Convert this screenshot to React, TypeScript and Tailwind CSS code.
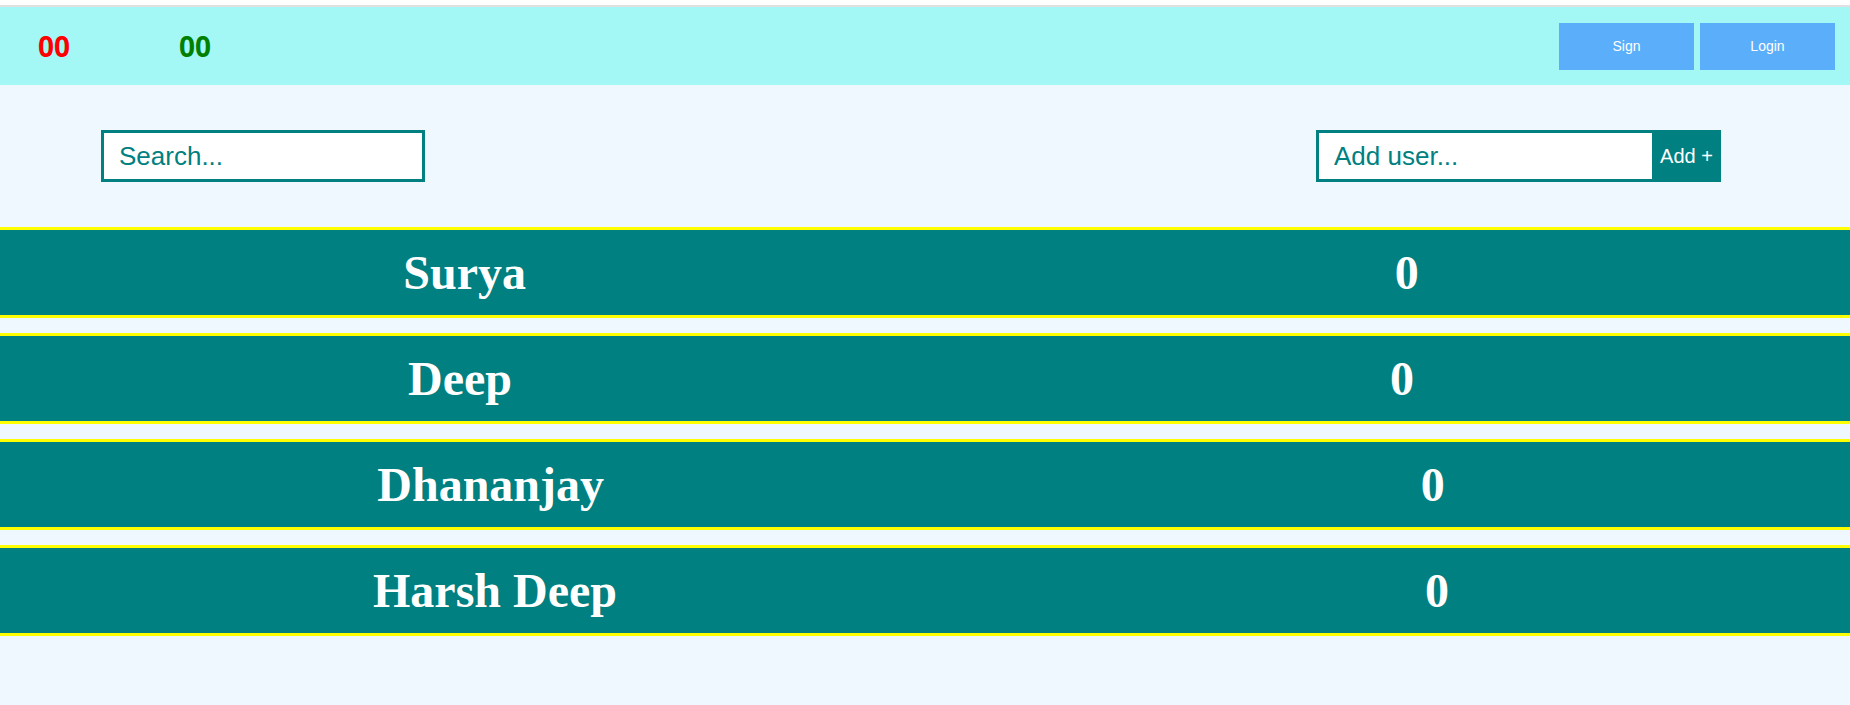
const users = [
  { name: "Surya", score: 0 },
  { name: "Deep", score: 0 },
  { name: "Dhananjay", score: 0 },
  { name: "Harsh Deep", score: 0 },
];

function Header() {
  return (
    <div className="flex items-center justify-between h-[78px] bg-[#a3f8f6] border-t-2 border-[#e0e0e0] box-content">
      <div className="flex items-center pl-[38px] font-['Open_Sans',sans-serif] font-bold text-[28px]">
        <span className="text-[#ff0000] w-[141px]">00</span>
        <span className="text-[#008000]">00</span>
      </div>
      <div className="flex gap-[6px] pr-[15px] font-['Liberation_Sans',Arial,sans-serif] text-sm">
        <button className="w-[135px] h-[47px] bg-[#5baefa] text-white">Sign</button>
        <button className="w-[135px] h-[47px] bg-[#5baefa] text-white">Login</button>
      </div>
    </div>
  );
}

function Toolbar() {
  return (
    <div className="flex justify-between pl-[101px] pr-[129px] py-[45px] font-['Liberation_Sans',Arial,sans-serif]">
      <input
        className="w-[324px] h-[52px] border-[3px] border-[#008080] bg-white px-[15px] text-[26px] text-[#008080] placeholder:text-[#008080] outline-none"
        type="text"
        placeholder="Search..."
      />
      <div className="flex h-[52px]">
        <input
          className="w-[336px] h-[52px] border-[3px] border-r-0 border-[#008080] bg-white px-[15px] text-[26px] text-[#008080] placeholder:text-[#008080] outline-none"
          type="text"
          placeholder="Add user..."
        />
        <button className="w-[69px] h-[52px] bg-[#008080] text-white text-[20px]">Add +</button>
      </div>
    </div>
  );
}

function UserRow({ name, score }: { name: string; score: number }) {
  return (
    <div className="flex items-center justify-around h-[91px] bg-[#008080] border-y-[3px] border-[#ffff00] font-['Liberation_Serif','Times_New_Roman',serif] font-bold text-[48px] text-white">
      <h1 className="mr-[62px]">{name}</h1>
      <h1 className="mr-[28px]">{score}</h1>
    </div>
  );
}

export default function App() {
  return (
    <div className="min-h-[705px] bg-white pt-[5px]">
      <div className="min-h-[700px] bg-[#f0f8ff]">
        <Header />
        <Toolbar />
        <div className="flex flex-col gap-[15px]">
          {users.map((u) => (
            <UserRow key={u.name} name={u.name} score={u.score} />
          ))}
        </div>
      </div>
    </div>
  );
}
